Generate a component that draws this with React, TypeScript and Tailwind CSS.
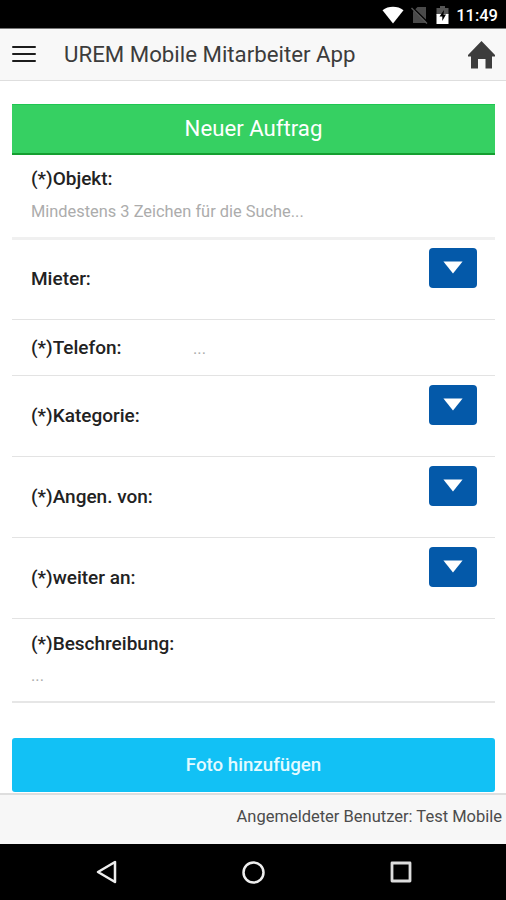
import React from 'react';

interface SelectRowProps {
  label: string;
}

function SelectRow({ label }: SelectRowProps) {
  return (
    <div className="flex h-[81px] items-start justify-between border-b border-[#e3e3e3] pr-[18px] pl-[19px]">
      <label className="mt-7 text-[19px] leading-6 font-medium text-[#222]">{label}</label>
      <button
        type="button"
        aria-label={label}
        className="mt-[9px] flex h-10 w-12 justify-center rounded-[4px] bg-[#0459a9] pt-[13px]"
      >
        <svg width="20" height="13" viewBox="0 0 20 13" fill="#fff">
          <path d="M.4.5h19.2L10 12.4z" />
        </svg>
      </button>
    </div>
  );
}

function StatusBar() {
  return (
    <div className="flex h-7 items-center justify-end bg-black pr-[8px]">
      {/* Wifi */}
      <svg className="mt-px mr-[7px]" width="22" height="18" viewBox="0 0 22 18" fill="#fff">
        <path d="M.5 4.2C6.3-.4 15.7-.4 21.5 4.2L11 17.5z" />
      </svg>
      {/* No SIM */}
      <svg className="mt-px mr-[8px]" width="17" height="18" viewBox="0 0 17 18">
        <path d="M2 5.5 6.5 1H15v16H2z" fill="#4a4a4a" />
        <path d="M1 1 17 16.5" stroke="#000" strokeWidth="1.5" />
        <path d="M.5 2 16 17.5" stroke="#555" strokeWidth="1.5" />
      </svg>
      {/* Battery */}
      <svg className="mt-px mr-[7px]" width="13" height="18" viewBox="0 0 13 18">
        <path d="M4 0h5v2h3.5v7H.5V2H4z" fill="#555" />
        <path d="M.5 8h12v10H.5z" fill="#fff" />
        <path d="M8 4 3.5 10.5h2.8V15L10 8.5H7.5z" fill="#000" />
      </svg>
      <span className="mt-[3px] text-[16.5px] leading-5 font-medium text-white">11:49</span>
    </div>
  );
}

export default function App() {
  return (
    <div className="flex h-[900px] w-[506px] flex-col overflow-hidden bg-white font-['Roboto',sans-serif]">
      <StatusBar />

      {/* Header */}
      <header className="flex h-[53px] shrink-0 items-center border-t border-b border-t-[#777] border-b-[#dedede] bg-[#f8f8f8] pb-[2px] pl-3 pr-[11px]">
        <svg width="24" height="18" viewBox="0 0 24 18" stroke="#1c1c1c" strokeWidth="2" strokeLinecap="round">
          <path d="M1 2h22M1 9h22M1 16h22" />
        </svg>
        <h1 className="ml-7 text-[22.25px] leading-7 whitespace-nowrap text-[#3c3c3c]">UREM Mobile Mitarbeiter App</h1>
        <svg className="mt-[2px] ml-auto" width="27" height="28" viewBox="0 0 27 28" fill="#3d3d3d">
          <path d="M13.5 0 27 14v1.5h-3V27.500h-6.500V18h-7.500v9.500H3V15.500H0V14z" />
        </svg>
      </header>

      <main className="flex flex-1 flex-col pt-[23px] pr-[11px] pl-3">
        <div className="flex h-[51px] items-center justify-center border-t border-b-2 border-t-[#1fc651] border-b-[#159e30] bg-[#36d062] text-[22.2px] text-white">
          Neuer Auftrag
        </div>

        <div className="-mb-px flex h-[85px] flex-col border-b-[3px] border-[#f0f0f0] pt-[12px] pl-[19px]">
          <label className="text-[19px] leading-6 font-medium text-[#222]">(*)Objekt:</label>
          <span className="mt-[9px] text-[16.4px] leading-6 text-[#acacac]">Mindestens 3 Zeichen für die Suche...</span>
        </div>

        <SelectRow label="Mieter:" />

        <div className="flex h-14 items-center border-b border-[#e3e3e3] pl-[19px]">
          <label className="w-[162px] text-[19px] leading-6 font-medium text-[#222]">(*)Telefon:</label>
          <span className="mt-[2px] text-[16.4px] leading-6 text-[#acacac]">...</span>
        </div>

        <SelectRow label="(*)Kategorie:" />
        <SelectRow label="(*)Angen. von:" />
        <SelectRow label="(*)weiter an:" />

        <div className="flex h-[84px] flex-col border-b-2 border-[#e6e6e6] pt-[13px] pl-[19px]">
          <label className="text-[19px] leading-6 font-medium text-[#222]">(*)Beschreibung:</label>
          <span className="mt-[8px] text-[16.4px] leading-6 text-[#acacac]">...</span>
        </div>

        <button
          type="button"
          className="mt-[35px] h-[54px] shrink-0 rounded-[3px] bg-[#12c1f5] pt-px text-[18.7px] font-medium text-[#e4faff]"
        >
          Foto hinzufügen
        </button>
      </main>

      <footer className="h-[51px] shrink-0 border-t-2 border-[#dedede] bg-[#f7f7f7] pt-[10px] pr-[4px] text-right text-[16.5px] leading-6 text-[#4c4c4c]">
        Angemeldeter Benutzer: Test Mobile
      </footer>

      {/* Android navigation */}
      <nav className="flex h-14 shrink-0 items-center bg-black pl-[96px]">
        <svg width="22" height="24" viewBox="0 0 22 24" fill="none" stroke="#eee" strokeWidth="2.5" strokeLinejoin="round">
          <path d="M19 2v20L2 12z" />
        </svg>
        <svg className="ml-[123px]" width="25" height="25" viewBox="0 0 25 25" fill="none" stroke="#eee" strokeWidth="2.5">
          <circle cx="12.5" cy="12.5" r="10" />
        </svg>
        <svg className="ml-[124px]" width="22" height="22" viewBox="0 0 22 22" fill="none" stroke="#ddd" strokeWidth="2.8" strokeLinejoin="round">
          <path d="M2 2h18v18H2z" />
        </svg>
      </nav>
    </div>
  );
}
